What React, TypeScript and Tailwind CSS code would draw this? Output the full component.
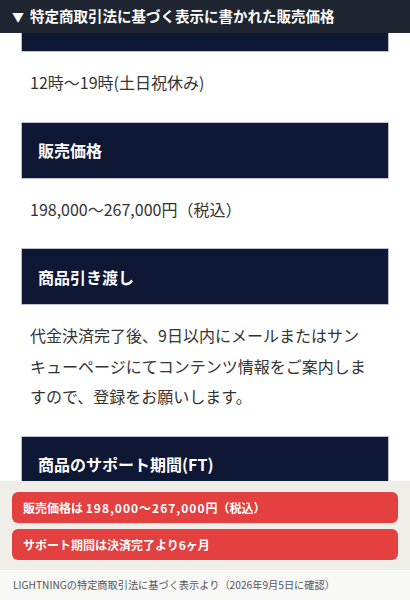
const FONT = { fontFamily: '"Noto Sans CJK JP", "Noto Sans", sans-serif' }

function Heading({ children }: { children?: React.ReactNode }) {
  return (
    <div className="mx-[21px] h-[57px] flex items-center pl-4 bg-[#0e1734] border border-[#bcc0d2] text-white text-[16px] font-bold">
      {children}
    </div>
  )
}

function Body({ children }: { children: React.ReactNode }) {
  return (
    <p className="pl-[30px] pr-[40px] mt-[15px] mb-[24px] text-[16px] leading-[30.5px] text-[#333]">
      {children}
    </p>
  )
}

export default function App() {
  return (
    <div className="w-[410px] h-[600px] flex flex-col overflow-hidden bg-white" style={FONT}>
      <div className="h-[33px] shrink-0 bg-[#1f2631] flex items-center pl-[12px] text-white font-bold leading-none">
        <span className="text-[12px] w-[18px]">▼</span>
        <span className="text-[14.5px]">特定商取引法に基づく表示に書かれた販売価格</span>
      </div>

      <div className="flex-1 overflow-hidden">
        {/* scrolled: only the bottom edge of the first heading shows */}
        <div className="-mt-[38px]">
          <Heading />
          <Body>12時〜19時(土日祝休み)</Body>
          <Heading>販売価格</Heading>
          <Body>198,000〜267,000円（税込）</Body>
          <Heading>商品引き渡し</Heading>
          <Body>
            代金決済完了後、9日以内にメールまたはサンキューページにてコンテンツ情報をご案内しますので、登録をお願いします。
          </Body>
          <Heading>商品のサポート期間(FT)</Heading>
        </div>
      </div>

      <div className="shrink-0 bg-[#efeee9] px-[12px] pt-[11px] pb-[10px] flex flex-col gap-[6px]">
        <div className="h-[31px] rounded-[6px] bg-[#e3403f] flex items-center px-[11px] text-white text-[12px] font-bold">
          <span>
            販売価格は <span className="tracking-[1px]">198,000〜267,000</span>円（税込）
          </span>
        </div>
        <div className="h-[31px] rounded-[6px] bg-[#e3403f] flex items-center px-[11px] text-white text-[12px] font-bold">
          サポート期間は決済完了より6ヶ月
        </div>
      </div>
      <div className="h-[30px] shrink-0 bg-[#f8f8f6] flex items-center px-[13px] text-[10.2px] text-[#555]">
        LIGHTNINGの特定商取引法に基づく表示より（2026年9月5日に確認）
      </div>
    </div>
  )
}
